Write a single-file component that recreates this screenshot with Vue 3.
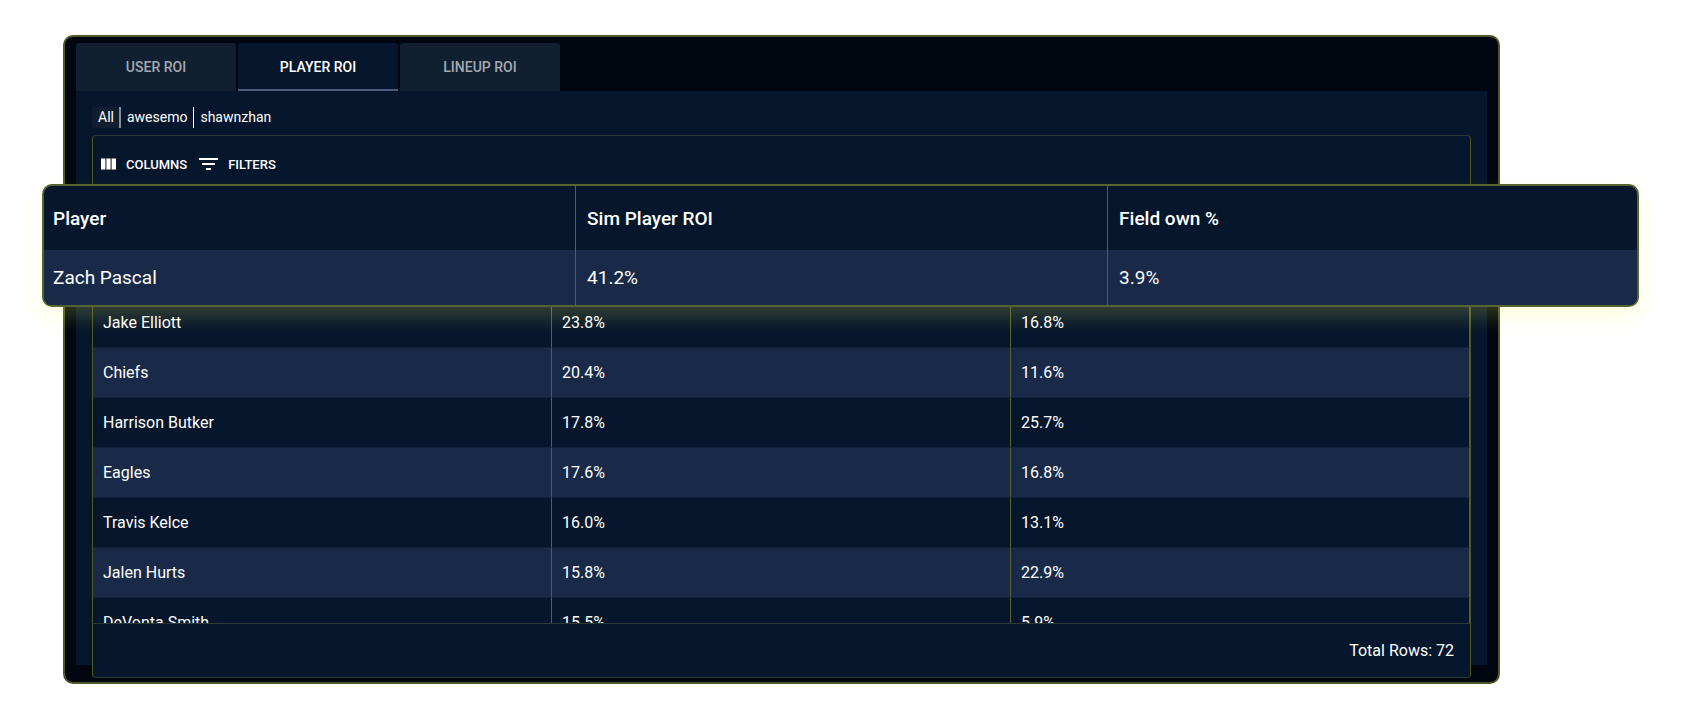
<template>
  <main class="stage">
    <section class="panel">
      <nav class="tabs">
        <button
          v-for="tab in tabs"
          :key="tab"
          type="button"
          class="tab"
          :class="{ active: tab === activeTab }"
          @click="activeTab = tab"
        >
          {{ tab }}
        </button>
      </nav>

      <div class="content">
        <div class="users">
          <button
            v-for="user in users"
            :key="user"
            type="button"
            class="user"
            :class="{ selected: user === activeUser }"
            @click="activeUser = user"
          >
            {{ user }}
          </button>
        </div>

        <div class="grid">
          <div class="toolbar">
            <button type="button" class="tool">
              <svg class="tool-icon" width="15" height="12" viewBox="0 0 15 12" fill="currentColor">
                <rect x="0" y="0.5" width="4.4" height="11" />
                <rect x="5.4" y="0.5" width="4.2" height="11" />
                <rect x="10.6" y="0.5" width="4.4" height="11" />
              </svg>
              <span>COLUMNS</span>
            </button>
            <button type="button" class="tool">
              <svg class="tool-icon" width="19" height="12" viewBox="0 0 19 12" fill="currentColor">
                <rect x="0" y="0" width="19" height="2" />
                <rect x="3" y="5" width="13" height="2" />
                <rect x="7" y="10" width="5" height="2" />
              </svg>
              <span>FILTERS</span>
            </button>
          </div>

          <!-- Top row, lifted out of the grid -->
          <div class="highlight">
            <table>
              <thead>
                <tr>
                  <th v-for="column in columns" :key="column" scope="col">{{ column }}</th>
                </tr>
              </thead>
              <tbody>
                <tr>
                  <td>{{ topPlayer.name }}</td>
                  <td>{{ topPlayer.roi }}</td>
                  <td>{{ topPlayer.own }}</td>
                </tr>
              </tbody>
            </table>
          </div>

          <div class="rows">
            <table>
              <tbody>
                <tr v-for="player in players" :key="player.name">
                  <td>{{ player.name }}</td>
                  <td>{{ player.roi }}</td>
                  <td>{{ player.own }}</td>
                </tr>
              </tbody>
            </table>
          </div>

          <footer class="grid-footer">Total Rows: {{ totalRows }}</footer>
        </div>
      </div>
    </section>
  </main>
</template>

<script setup>
import { ref } from 'vue';

const tabs = ['USER ROI', 'PLAYER ROI', 'LINEUP ROI'];
const activeTab = ref('PLAYER ROI');

const users = ['All', 'awesemo', 'shawnzhan'];
const activeUser = ref('All');

const columns = ['Player', 'Sim Player ROI', 'Field own %'];
const topPlayer = { name: 'Zach Pascal', roi: '41.2%', own: '3.9%' };
const players = [
  { name: 'Jake Elliott', roi: '23.8%', own: '16.8%' },
  { name: 'Chiefs', roi: '20.4%', own: '11.6%' },
  { name: 'Harrison Butker', roi: '17.8%', own: '25.7%' },
  { name: 'Eagles', roi: '17.6%', own: '16.8%' },
  { name: 'Travis Kelce', roi: '16.0%', own: '13.1%' },
  { name: 'Jalen Hurts', roi: '15.8%', own: '22.9%' },
  { name: 'DeVonta Smith', roi: '15.5%', own: '5.9%' },
];
const totalRows = 72;
</script>

<style>
body {
  margin: 0;
  background-color: #fff;
}
</style>

<style scoped>
.stage {
  padding: 35px 182px 35px 63px;
  font-family: Roboto, sans-serif;
  color: #fff;
}

button {
  border: none;
  margin: 0;
  padding: 0;
  background: none;
  color: inherit;
  font-family: inherit;
  cursor: pointer;
}

.panel {
  padding: 6px 11px 17px;
  border: 2px solid #4d5826;
  border-radius: 10px;
  background-color: #010610;
}

.tabs {
  display: flex;
  gap: 2px;
}

.tab {
  width: 160px;
  height: 48px;
  border-radius: 3px 3px 0 0;
  background-color: #112030;
  color: #a4a9b0;
  font-size: 14px;
  font-weight: 500;
}

.tab.active {
  background-color: #06162c;
  box-shadow: inset 0 -2px #4b5c7c;
  color: #fff;
}

/* flow-root keeps the grid's negative margin inside, so the grid hangs over the edge */
.content {
  display: flow-root;
  padding: 16px 16px 0;
  background-color: #06162c;
}

.users {
  display: flex;
  margin-bottom: 7px;
}

.user {
  height: 21px;
  padding: 0 6px 2px;
  border-right: 1px solid #fff;
  font-size: 14px;
}

.user.selected {
  padding-right: 5px;
  border-right: 2px solid #888f99;
  border-radius: 3px 0 0 3px;
  background-color: #101e30;
}

.user:last-child {
  border-right: none;
}

.grid {
  margin-bottom: -13px;
  border: 1px solid #4d5826;
  border-top-color: #2d3a33;
  border-bottom-color: #2d3a33;
  border-radius: 4px;
  background-color: #06162c;
}

.toolbar {
  display: flex;
  gap: 12px;
  height: 30px;
  padding: 13px 8px 5px;
}

.tool {
  display: flex;
  align-items: center;
  gap: 10px;
  font-size: 13px;
  font-weight: 500;
}

.tool-icon {
  flex: none;
}

table {
  width: 100%;
  border-collapse: separate;
  border-spacing: 0;
  table-layout: fixed;
}

th,
td {
  box-sizing: border-box;
  padding: 0 10px;
  border-right: 1px solid #56642f;
  text-align: left;
}

.highlight {
  position: relative;
  z-index: 1;
  margin: 0 -169px 0 -51px;
  overflow: hidden;
  border: 2px solid #56652f;
  border-radius: 10px;
  background-color: #06162c;
  box-shadow: 0 10px 20px rgba(246, 250, 90, 0.2);
}

.highlight th {
  width: 33.4%;
  height: 64px;
  padding: 0 11px;
  font-size: 19px;
  font-weight: 500;
}

.highlight td {
  height: 55px;
  padding: 0 11px;
  background-color: #182a48;
  font-size: 19px;
}

.highlight th:first-child,
.highlight td:first-child {
  padding-left: 9px;
}

.highlight th:last-child,
.highlight td:last-child {
  border-right: none;
}

.highlight th:last-child {
  width: auto;
}

.rows {
  height: 325px;
  margin-top: -9px;
  overflow: hidden;
}

.rows td {
  height: 50px;
  border-bottom: 1px solid #122039;
  font-size: 16px;
}

.rows tr:nth-child(even) td {
  background-color: #182a48;
}

.grid-footer {
  padding: 15px 16px 14px;
  border-top: 1px solid #2d3a33;
  font-size: 16px;
  line-height: 24px;
  text-align: right;
}
</style>
